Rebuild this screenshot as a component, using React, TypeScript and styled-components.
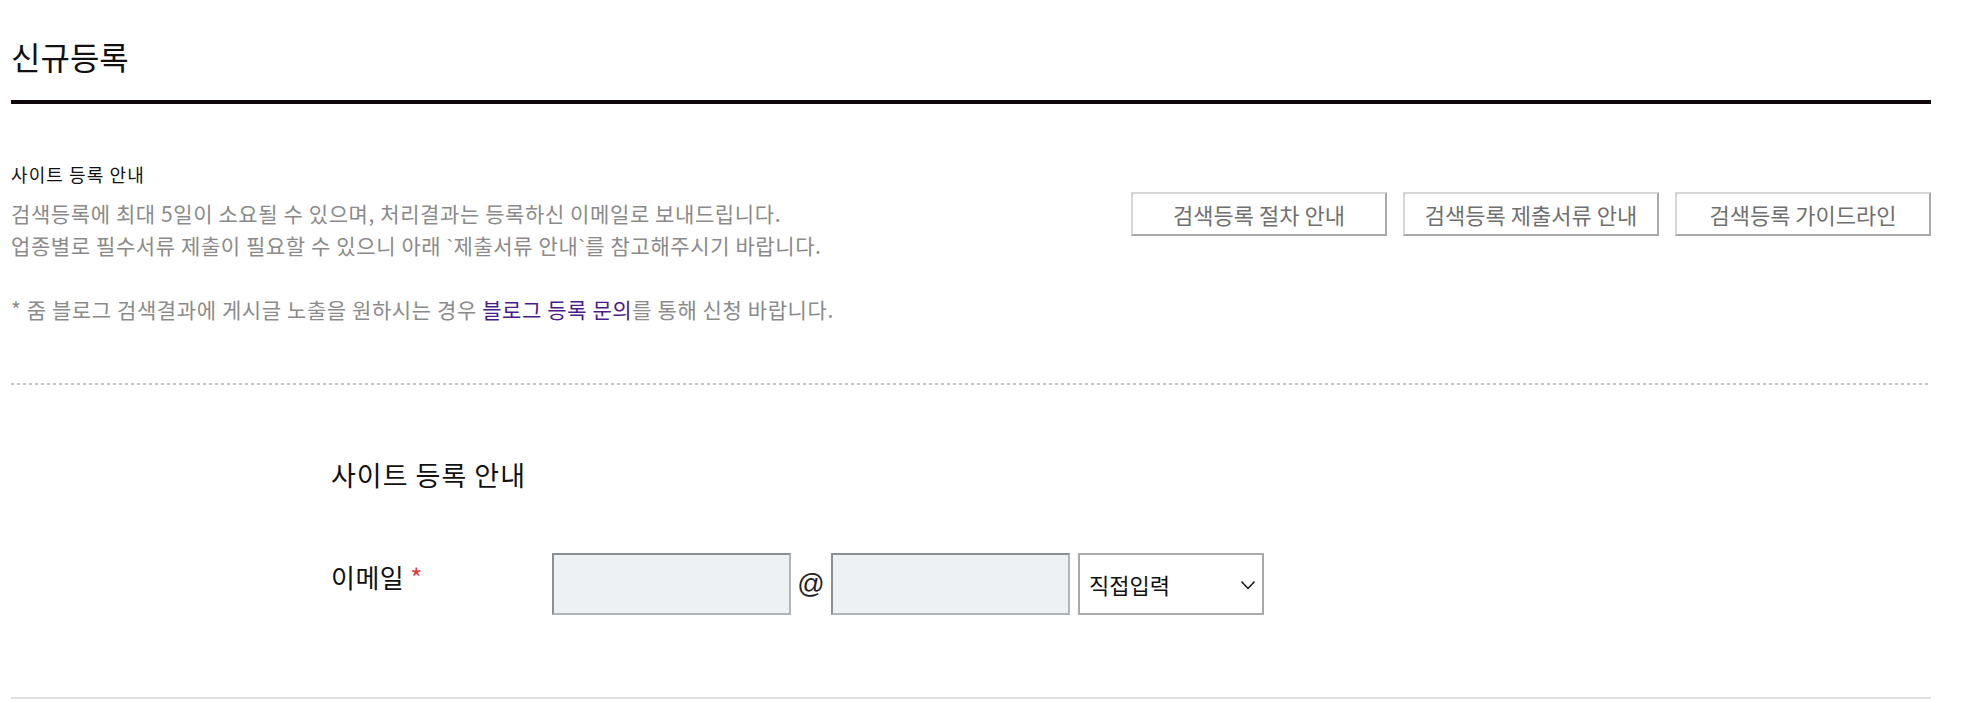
import React from 'react';
import styled, { createGlobalStyle } from 'styled-components';

const GlobalStyle = createGlobalStyle`
  html, body { margin: 0; padding: 0; background: #fff; }
  body {
    font-family: "Noto Sans CJK KR", "Noto Sans", sans-serif;
    color: #111;
  }
`;

const Page = styled.div`
  width: 1920px;
  margin-left: 11px;
`;

const TitleBar = styled.h1`
  margin: 0;
  padding: 35px 0 23px 0;
  font-size: 32px;
  line-height: 42px;
  font-weight: 400;
  color: #111;
  border-bottom: 4px solid #0d0509;
`;

const Guide = styled.section`
  padding-top: 57px;
`;

const GuideTitle = styled.h2`
  margin: 0;
  font-size: 18px;
  line-height: 26px;
  font-weight: 400;
  letter-spacing: 1.1px;
  color: #111;
`;

const GuideRow = styled.div`
  display: flex;
  justify-content: space-between;
  align-items: flex-start;
  margin-top: 5px;
`;

const GuideText = styled.p`
  margin: 0;
  padding-top: 5px;
  font-size: 21px;
  line-height: 32px;
  color: #8a8a8a;
  letter-spacing: 0.6px;
`;

const Tick = styled.span`
  font-family: "Liberation Sans", sans-serif;
  letter-spacing: 0;
  line-height: 0;
`;

const GuideLink = styled.a`
  color: #4b1a8c;
  text-decoration: none;
`;

const ButtonGroup = styled.div`
  display: flex;
  gap: 16px;
`;

const GuideButton = styled.button`
  width: 256px;
  height: 44px;
  box-sizing: border-box;
  background: #fff;
  border: 2px solid;
  border-color: #d6d6d6 #a9a9a9 #a9a9a9 #d6d6d6;
  font-family: "Noto Sans CJK KR", sans-serif;
  font-size: 22px;
  line-height: 1;
  color: #6f6f6f;
  letter-spacing: 0;
  padding: 0;
  cursor: pointer;
`;

const DottedDivider = styled.div`
  margin-top: 58px;
  height: 2px;
  background-image: repeating-linear-gradient(to right, #c6c6c6 0 3px, transparent 3px 6px);
`;

const FormSection = styled.section`
  padding-left: 320px;
  padding-top: 72px;
`;

const FormTitle = styled.h3`
  margin: 0;
  font-size: 27px;
  line-height: 36px;
  font-weight: 400;
  letter-spacing: 1px;
  color: #111;
`;

const FormRow = styled.div`
  display: flex;
  align-items: flex-start;
  margin-top: 60px;
`;

const FieldLabel = styled.label`
  width: 221px;
  padding-top: 7px;
  font-size: 26px;
  line-height: 34px;
  letter-spacing: 0.5px;
  color: #111;
`;

const Required = styled.span`
  color: #e8372e;
  margin-left: 6px;
`;

const FieldGroup = styled.div`
  display: flex;
  align-items: center;
`;

const TextInput = styled.input`
  width: 239px;
  height: 62px;
  box-sizing: border-box;
  border: 2px solid;
  border-color: #8c8f92 #b2b5b8 #b2b5b8 #8c8f92;
  background: #eef1f4;
  padding: 0 10px;
  font-size: 20px;
  font-family: inherit;
  outline: none;
`;

const AtSign = styled.span`
  width: 40px;
  text-align: center;
  font-size: 27px;
  line-height: 34px;
  color: #222;
  font-family: "Liberation Sans", sans-serif;
`;

const SelectWrap = styled.div`
  position: relative;
  margin-left: 8px;
  width: 186px;
  height: 62px;
`;

const Select = styled.select`
  appearance: none;
  -webkit-appearance: none;
  width: 100%;
  height: 100%;
  box-sizing: border-box;
  border: 2px solid #a7a9ab;
  background: #fff;
  padding: 0 30px 0 9px;
  font-family: "Noto Sans CJK KR", sans-serif;
  font-size: 22px;
  color: #111;
  outline: none;
  border-radius: 0;
`;

const Chevron = styled.svg`
  position: absolute;
  right: 8px;
  top: 27px;
  pointer-events: none;
`;

const BottomLine = styled.div`
  margin-top: 82px;
  height: 2px;
  background: #dfe1e3;
`;

export default function App() {
  return (
    <>
      <GlobalStyle />
      <Page>
        <TitleBar>신규등록</TitleBar>
        <Guide>
          <GuideTitle>사이트 등록 안내</GuideTitle>
          <GuideRow>
            <GuideText>
              검색등록에 최대 5일이 소요될 수 있으며, 처리결과는 등록하신 이메일로 보내드립니다.
              <br />
              업종별로 필수서류 제출이 필요할 수 있으니 아래 <Tick>`</Tick>제출서류 안내<Tick>`</Tick>를 참고해주시기 바랍니다.
              <br />
              <br />* 줌 블로그 검색결과에 게시글 노출을 원하시는 경우{' '}
              <GuideLink href="#">블로그 등록 문의</GuideLink>를 통해 신청 바랍니다.
            </GuideText>
            <ButtonGroup>
              <GuideButton>검색등록 절차 안내</GuideButton>
              <GuideButton>검색등록 제출서류 안내</GuideButton>
              <GuideButton>검색등록 가이드라인</GuideButton>
            </ButtonGroup>
          </GuideRow>
        </Guide>
        <DottedDivider />
        <FormSection>
          <FormTitle>사이트 등록 안내</FormTitle>
          <FormRow>
            <FieldLabel>
              이메일<Required>*</Required>
            </FieldLabel>
            <FieldGroup>
              <TextInput type="text" />
              <AtSign>@</AtSign>
              <TextInput type="text" />
              <SelectWrap>
                <Select defaultValue="direct">
                  <option value="direct">직접입력</option>
                </Select>
                <Chevron width="16" height="10" viewBox="0 0 16 10">
                  <path d="M1.5 1.5 L8 8.5 L14.5 1.5" fill="none" stroke="#111" strokeWidth="1.5" />
                </Chevron>
              </SelectWrap>
            </FieldGroup>
          </FormRow>
        </FormSection>
        <BottomLine />
      </Page>
    </>
  );
}
